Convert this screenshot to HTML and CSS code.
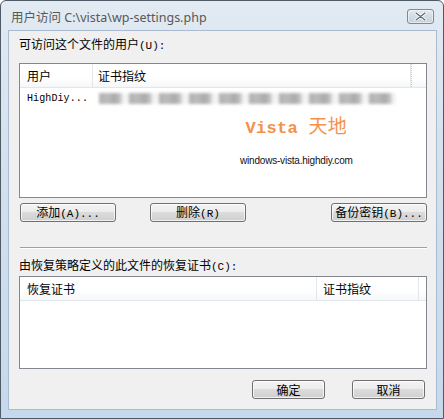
FILE: index.html
```html
<!DOCTYPE html>
<html lang="zh-CN">
<head>
<meta charset="utf-8">
<title>用户访问</title>
<link rel="stylesheet" href="styles.css">
</head>
<body>
<div class="window">
  <div class="titlebar">
    <span class="title">用户访问 C:\vista\wp-settings.php</span>
    <span class="close">
      <svg width="15" height="9" viewBox="0 0 15 9"><path d="M3 1 L12 8 M12 1 L3 8" stroke="#fff" stroke-width="3" stroke-linecap="round"/><path d="M3 1 L12 8 M12 1 L3 8" stroke="#5c6670" stroke-width="1.2" stroke-linecap="round"/></svg>
    </span>
  </div>
  <div class="client">
    <div class="label">可访问这个文件的用户<span class="acc">(U):</span></div>
    <div class="list list-users">
      <div class="head">
        <div class="col c-user">用户</div>
        <div class="col c-thumb">证书指纹</div>
        <div class="col c-rest"></div>
      </div>
      <div class="row">
        <div class="cell-user">HighDiy...</div>
        <div class="blur"></div>
      </div>
      <div class="watermark">
        <div class="wm-big">Vista <span class="wm-cn">天地</span></div>
        <div class="wm-small">windows-vista.highdiy.com</div>
      </div>
    </div>
    <div class="btnrow">
      <button class="btn w96">添加<span class="acc">(A)...</span></button>
      <button class="btn w96">删除<span class="acc">(R)</span></button>
      <span class="spacer"></span>
      <button class="btn w96">备份密钥<span class="acc">(B)...</span></button>
    </div>
    <div class="sep"></div>
    <div class="label label2">由恢复策略定义的此文件的恢复证书<span class="acc">(C):</span></div>
    <div class="list list-rec">
      <div class="head">
        <div class="col c-rec">恢复证书</div>
        <div class="col c-thumb2">证书指纹</div>
        <div class="col c-rest2"></div>
      </div>
    </div>
    <div class="okrow">
      <button class="btn w73">确定</button>
      <button class="btn w73">取消</button>
    </div>
  </div>
</div>
</body>
</html>
```
FILE: styles.css
```css
html, body {
  margin: 0;
  padding: 0;
  background: #ffffff;
}
body {
  width: 444px;
  height: 419px;
  overflow: hidden;
  font-family: "Noto Sans CJK SC", "Noto Sans", sans-serif;
  font-size: 12px;
  color: #000;
}
.window {
  box-sizing: border-box;
  width: 444px;
  height: 419px;
  border: 1px solid #4e5a66;
  border-radius: 6px 6px 0 0;
  background: linear-gradient(180deg, #e2eaf2 0%, #d3e1ee 40%, #c6d9ec 100%);
  display: flex;
  flex-direction: column;
}
.titlebar {
  height: 29px;
  display: flex;
  align-items: center;
  padding: 0 9px 0 10px;
}
.title {
  flex: 1;
  font-family: "Noto Sans", "Noto Sans CJK SC", sans-serif;
  font-size: 12.5px;
  color: #585858;
  padding-top: 1px;
}
.close {
  width: 25px;
  height: 13px;
  border: 1px solid #7d8995;
  border-radius: 3px;
  background: linear-gradient(180deg, #e3e9f0 0%, #d2dce6 50%, #c6d2de 100%);
  display: flex;
  align-items: center;
  justify-content: center;
  margin-top: 2px;
  box-shadow: inset 0 0 0 1px rgba(255,255,255,0.5);
}
.client {
  margin: 0 6px 8px 7px;
  flex: 1;
  background: #f0f0f0;
  border: 1px solid #a9bccf;
  padding: 6px 9px 0 10px;
  display: flex;
  flex-direction: column;
}
.label {
  line-height: 14px;
  height: 14px;
  white-space: nowrap;
}
.acc {
  font-family: "Liberation Mono", "DejaVu Sans Mono", monospace;
  font-size: 11px;
}
.list {
  box-sizing: border-box;
  background: #fff;
  border: 1px solid #828790;
  position: relative;
}
.list-users {
  margin-top: 12px;
  height: 135px;
}
.head {
  display: flex;
  height: 23px;
  border-bottom: 1px solid #e2e5ea;
  background: linear-gradient(180deg, #ffffff 0%, #ffffff 60%, #f6f7f8 100%);
}
.col {
  box-sizing: border-box;
  line-height: 23px;
  padding-left: 7px;
  border-right: 1px solid #e3e6ea;
  white-space: nowrap;
}
.c-user { width: 73px; }
.c-thumb { width: 318px; padding-left: 5px; }
.c-rest { flex: 1; border-right: none; border-left: 1px dotted #c8ccd0; }
.c-rec { width: 300px; }
.c-thumb2 { width: 103px; padding-left: 6px; }
.c-rest2 { flex: 1; border-right: none; }
.row {
  display: flex;
  align-items: center;
  height: 21px;
}
.cell-user {
  width: 73px;
  padding-left: 7px;
  box-sizing: border-box;
  font-family: "Liberation Mono", "DejaVu Sans Mono", monospace;
  font-size: 10px;
  letter-spacing: 0.1px;
}
.blur {
  margin-left: 6px;
  width: 297px;
  height: 11px;
  background: repeating-linear-gradient(90deg, #a4a4a4 0px, #b0b0b0 8px, #9c9c9c 16px, #b8b8b8 21px, #f2f2f2 24px, #f2f2f2 30px);
  filter: blur(1.8px);
  opacity: 0.85;
}
.watermark {
  position: absolute;
  left: 220px;
  top: 50px;
  display: flex;
  flex-direction: column;
  align-items: center;
}
.wm-big {
  font-family: "Liberation Mono", "Noto Sans CJK SC", monospace;
  font-size: 17px;
  font-weight: bold;
  color: #f5914a;
  line-height: 22px;
  letter-spacing: 0.3px;
}
.wm-cn {
  font-family: "Noto Sans CJK SC", sans-serif;
  font-weight: normal;
  font-size: 19px;
}
.wm-small {
  font-family: "Liberation Sans", sans-serif;
  font-size: 10px;
  line-height: 14px;
  margin-top: 14px;
  color: #111;
  letter-spacing: -0.2px;
}
.btnrow {
  display: flex;
  gap: 34px;
  margin-top: 5px;
  margin-left: 1px;
}
.spacer { flex: 1; }
.btn {
  box-sizing: border-box;
  height: 19px;
  border: 1px solid #707070;
  border-radius: 3px;
  background: linear-gradient(180deg, #f4f4f4 0%, #ececec 45%, #dcdcdc 50%, #cfcfcf 100%);
  box-shadow: inset 0 0 0 1px rgba(255,255,255,0.7);
  font-family: "Noto Sans CJK SC", sans-serif;
  font-size: 12px;
  line-height: 15px;
  padding: 0;
  color: #000;
  white-space: nowrap;
}
.btnrow .spacer { margin-left: -34px; }
.w96 { width: 96px; }
.w73 { width: 73px; }
.sep {
  margin-top: 25px;
  margin-left: 1px;
  height: 1px;
  background: #a0a0a0;
  border-bottom: 1px solid #ffffff;
}
.label2 {
  margin-top: 9px;
}
.list-rec {
  margin-top: 4px;
  height: 93px;
}
.okrow {
  display: flex;
  justify-content: flex-end;
  gap: 27px;
  margin-top: 11px;
  padding-right: 2px;
}
```
